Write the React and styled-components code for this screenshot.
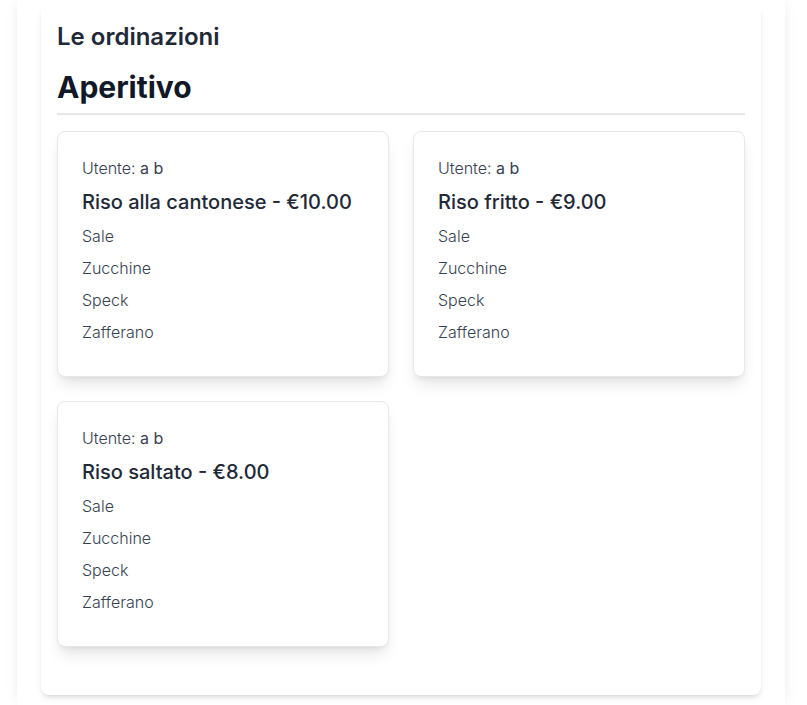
import React from "react";
import styled, { createGlobalStyle } from "styled-components";

const GlobalStyle = createGlobalStyle`
  *, *::before, *::after { box-sizing: border-box; }
  body {
    margin: 0;
    background: #fff;
    font-family: Inter, "Open Sans", sans-serif;
    font-size: 16px;
    line-height: 24px;
    color: #1f2937;
  }
  h2, h3, h4, p, ul { margin: 0; padding: 0; }
`;

const Page = styled.main`
  display: flex;
  min-height: 100vh;
  padding: 0 22px 0 17px;
  overflow: hidden;
`;

const Sheet = styled.div`
  flex: 1;
  min-width: 0;
  padding: 5px 24px 10px;
  background: #fff;
  box-shadow: 0 0 15px -3px rgba(0, 0, 0, 0.1), 0 0 6px -4px rgba(0, 0, 0, 0.1);
`;

const Panel = styled.section`
  padding: 16px 16px 48px;
  border-radius: 8px;
  background: #fff;
  box-shadow: 0 4px 6px -1px rgba(0, 0, 0, 0.1), 0 2px 4px -2px rgba(0, 0, 0, 0.1);
`;

const PanelTitle = styled.h2`
  margin-bottom: 16px;
  font-size: 24px;
  line-height: 32px;
  font-weight: 600;
`;

const CourseTitle = styled.h3`
  margin-bottom: 16px;
  padding-bottom: 8px;
  border-bottom: 2px solid #e5e7eb;
  font-size: 30px;
  line-height: 36px;
  font-weight: 700;
  color: #111827;
`;

const OrderGrid = styled.div`
  display: grid;
  grid-template-columns: repeat(2, minmax(0, 1fr));
  gap: 24px;
`;

const OrderCard = styled.article`
  padding: 24px;
  border: 1px solid #e5e7eb;
  border-radius: 8px;
  background: #fff;
  box-shadow: 0 10px 15px -3px rgba(0, 0, 0, 0.1), 0 4px 6px -4px rgba(0, 0, 0, 0.1);
`;

const UserLine = styled.p`
  margin-bottom: 8px;
  font-weight: 300;
  color: #374151;
`;

const UserName = styled.span`
  font-weight: 400;
`;

const DishTitle = styled.h4`
  margin-bottom: 8px;
  font-size: 20px;
  line-height: 28px;
  font-weight: 500;
`;

const Ingredients = styled.ul`
  list-style: none;
`;

const Ingredient = styled.li`
  margin-bottom: 8px;
  font-weight: 300;
  color: #374151;
`;

const ingredients = ["Sale", "Zucchine", "Speck", "Zafferano"];

const orders = [
  { user: "a b", dish: "Riso alla cantonese", price: "10.00", ingredients },
  { user: "a b", dish: "Riso fritto", price: "9.00", ingredients },
  { user: "a b", dish: "Riso saltato", price: "8.00", ingredients },
];

function Order({ order }) {
  return (
    <OrderCard>
      <UserLine>
        Utente: <UserName>{order.user}</UserName>
      </UserLine>
      <DishTitle>{`${order.dish} - €${order.price}`}</DishTitle>
      <Ingredients>
        {order.ingredients.map((name) => (
          <Ingredient key={name}>{name}</Ingredient>
        ))}
      </Ingredients>
    </OrderCard>
  );
}

export default function App() {
  return (
    <>
      <GlobalStyle />
      <Page>
        <Sheet>
          <Panel>
            <PanelTitle>Le ordinazioni</PanelTitle>
            <CourseTitle>Aperitivo</CourseTitle>
            <OrderGrid>
              {orders.map((order) => (
                <Order key={order.dish} order={order} />
              ))}
            </OrderGrid>
          </Panel>
        </Sheet>
      </Page>
    </>
  );
}
